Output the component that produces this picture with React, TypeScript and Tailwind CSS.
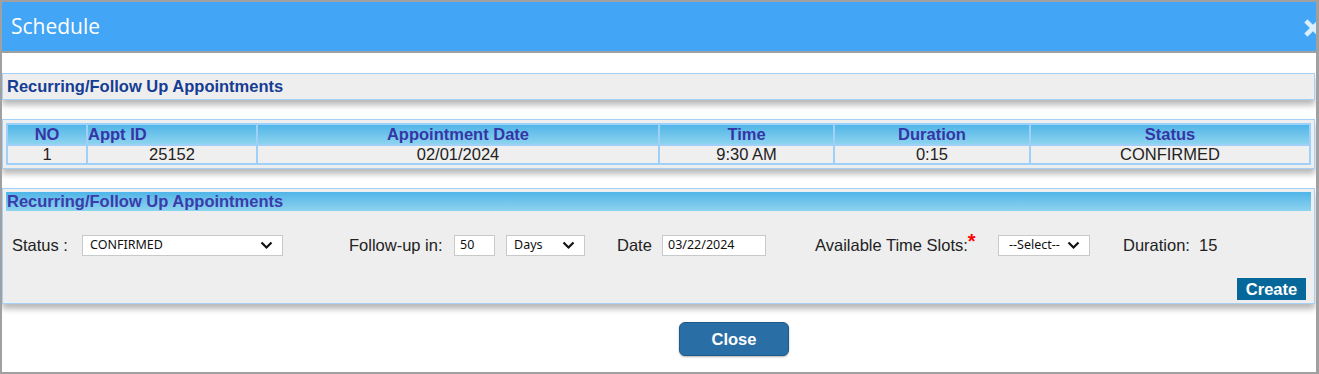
import { ReactNode } from "react";

const cols = [
  { label: "NO", value: "1", w: "w-[80px]", align: "text-center" },
  { label: "Appt ID", value: "25152", w: "w-[170px]", align: "text-left" },
  { label: "Appointment Date", value: "02/01/2024", w: "w-[402px]", align: "text-center" },
  { label: "Time", value: "9:30 AM", w: "w-[175px]", align: "text-center" },
  { label: "Duration", value: "0:15", w: "w-[196px]", align: "text-center" },
  { label: "Status", value: "CONFIRMED", w: "", align: "text-center" },
];

const Chevron = () => (
  <svg width="13" height="9" viewBox="0 0 13 9" className="shrink-0">
    <polyline points="1.5,1.5 6.5,6.5 11.5,1.5" fill="none" stroke="#111" strokeWidth="2.2" />
  </svg>
);

const FakeSelect = ({ value, className }: { value: string; className: string }) => (
  <div
    className={`h-[21px] bg-white border border-[#c9c9c9] flex items-center justify-between pl-[7px] pr-[9px] text-[12.5px] text-[#111] font-['Noto_Sans','Open_Sans',sans-serif] ${className}`}
  >
    <span>{value}</span>
    <Chevron />
  </div>
);

const FakeInput = ({ value, className }: { value: string; className: string }) => (
  <div
    className={`h-[21px] bg-white border border-[#c9c9c9] flex items-center pl-[5px] text-[12.5px] text-[#111] font-['Noto_Sans','Open_Sans',sans-serif] ${className}`}
  >
    {value}
  </div>
);

const Label = ({ children, className }: { children: ReactNode; className: string }) => (
  <span className={`text-[16.5px] text-[#222] whitespace-nowrap ${className}`}>{children}</span>
);

export default function App() {
  return (
    <div className="w-[1319px] h-[374px] border-2 border-r-[3px] border-[#a0a0a0] bg-white overflow-hidden font-['Liberation_Sans',Arial,sans-serif]">
      {/* title bar */}
      <div className="relative h-[51px] bg-[#42a5f5] border-b-2 border-[#a0a0a0] flex items-center pl-[9px] overflow-hidden">
        <span className="text-white text-[21px] font-['Open_Sans',sans-serif]">Schedule</span>
        <svg width="18" height="18" viewBox="0 0 18 18" className="absolute right-[-6px] top-[17px]">
          <path d="M3.5 3.5 L14.5 14.5 M14.5 3.5 L3.5 14.5" stroke="#dcefff" strokeWidth="4.5" strokeLinecap="square" />
        </svg>
      </div>

      <div className="pt-[20px] pr-[1px]">
        {/* section 1 header */}
        <div className="h-[27px] border border-[#a6d1f7] bg-[#eeeeee] shadow-[0_5px_6px_rgba(0,0,0,0.28)] flex items-center pl-[4px]">
          <span className="text-[16.5px] font-bold text-[#163d94]">Recurring/Follow Up Appointments</span>
        </div>

        {/* appointments table */}
        <div className="mt-[19px] border border-[#a6d1f7] bg-[#eeeeee] px-[3px] pt-[3px] pb-[3px] shadow-[0_5px_6px_rgba(0,0,0,0.28)]">
          <table className="w-full border-collapse table-fixed">
            <thead>
              <tr>
                {cols.map((c) => (
                  <th
                    key={c.label}
                    className={`${c.w} ${c.align} h-[21px] p-0 border-2 border-[#9fd0fa] bg-gradient-to-b from-[#4fb5e8] to-[#8dd3ef] text-[16.5px] font-bold text-[#3535a6] leading-none`}
                  >
                    {c.label}
                  </th>
                ))}
              </tr>
            </thead>
            <tbody>
              <tr>
                {cols.map((c) => (
                  <td
                    key={c.label}
                    className="h-[19px] p-0 border-2 border-[#9fd0fa] bg-[#efefef] text-center text-[16.5px] text-[#222] leading-none"
                  >
                    {c.value}
                  </td>
                ))}
              </tr>
            </tbody>
          </table>
        </div>

        {/* section 2 form */}
        <div className="mt-[19px] border border-[#a6d1f7] bg-[#eeeeee] px-[3px] pt-[3px] pb-[3px] shadow-[0_5px_6px_rgba(0,0,0,0.28)]">
          <div className="h-[19px] bg-gradient-to-b from-[#4fb5e8] to-[#8dd3ef] flex items-center pl-[1px]">
            <span className="text-[16.5px] font-bold text-[#3b3ba9]">Recurring/Follow Up Appointments</span>
          </div>

          <div className="mt-[24px] h-[21px] flex items-center">
            <Label className="ml-[6px] w-[70px]">Status :</Label>
            <FakeSelect value="CONFIRMED" className="w-[201px]" />
            <Label className="ml-[66px] w-[105px]">Follow-up in:</Label>
            <FakeInput value="50" className="w-[41px]" />
            <FakeSelect value="Days" className="ml-[11px] w-[79px]" />
            <Label className="ml-[32px] w-[45px]">Date</Label>
            <FakeInput value="03/22/2024" className="w-[104px]" />
            <Label className="ml-[49px] w-[183px]">
              Available Time Slots:<sup className="text-[#f00] text-[20px] font-bold relative top-[-3px]">*</sup>
            </Label>
            <FakeSelect value="--Select--" className="w-[92px] pl-[10px]" />
            <Label className="ml-[33px]">Duration:&nbsp; 15</Label>
          </div>

          <div className="mt-[22px] flex justify-end pr-[5px]">
            <button className="w-[69px] h-[22px] bg-[#06679b] text-white text-[16.5px] font-bold leading-none">
              Create
            </button>
          </div>
        </div>

        {/* close */}
        <div className="mt-[18px] pl-[677px]">
          <button className="w-[110px] h-[34px] rounded-[6px] bg-[#2a6ea6] border border-[#1d5a8c] shadow-[0_1px_2px_rgba(0,0,0,0.3)] text-white text-[16.5px] font-bold">
            Close
          </button>
        </div>
      </div>
    </div>
  );
}
